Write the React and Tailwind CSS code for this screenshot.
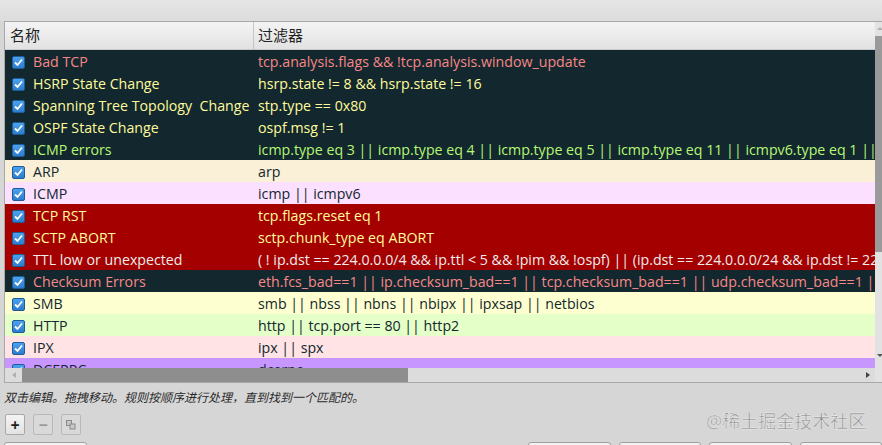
import React from "react";

const rules = [
  { name: "Bad TCP", filter: "tcp.analysis.flags && !tcp.analysis.window_update", bg: "bg-[#12272e]", fg: "text-[#f78787]" },
  { name: "HSRP State Change", filter: "hsrp.state != 8 && hsrp.state != 16", bg: "bg-[#12272e]", fg: "text-[#fffc9c]" },
  { name: "Spanning Tree Topology  Change", filter: "stp.type == 0x80", bg: "bg-[#12272e]", fg: "text-[#fffc9c]" },
  { name: "OSPF State Change", filter: "ospf.msg != 1", bg: "bg-[#12272e]", fg: "text-[#fffc9c]" },
  {
    name: "ICMP errors",
    filter: "icmp.type eq 3 || icmp.type eq 4 || icmp.type eq 5 || icmp.type eq 11 || icmpv6.type eq 1 || icmpv6.type eq 2 || icmpv6.type eq 3",
    bg: "bg-[#12272e]",
    fg: "text-[#b7f774]",
  },
  { name: "ARP", filter: "arp", bg: "bg-[#faf0d7]", fg: "text-[#12272e]" },
  { name: "ICMP", filter: "icmp || icmpv6", bg: "bg-[#fce0ff]", fg: "text-[#12272e]" },
  { name: "TCP RST", filter: "tcp.flags.reset eq 1", bg: "bg-[#a40000]", fg: "text-[#fffc9c]" },
  { name: "SCTP ABORT", filter: "sctp.chunk_type eq ABORT", bg: "bg-[#a40000]", fg: "text-[#fffc9c]" },
  {
    name: "TTL low or unexpected",
    filter: "( ! ip.dst == 224.0.0.0/4 && ip.ttl < 5 && !pim && !ospf) || (ip.dst == 224.0.0.0/24 && ip.dst != 224.0.0.251 && ip.ttl != 1)",
    bg: "bg-[#a40000]",
    fg: "text-[#ececec]",
  },
  {
    name: "Checksum Errors",
    filter: "eth.fcs_bad==1 || ip.checksum_bad==1 || tcp.checksum_bad==1 || udp.checksum_bad==1 || sctp.checksum_bad==1",
    bg: "bg-[#12272e]",
    fg: "text-[#f78787]",
  },
  { name: "SMB", filter: "smb || nbss || nbns || nbipx || ipxsap || netbios", bg: "bg-[#feffd0]", fg: "text-[#12272e]" },
  { name: "HTTP", filter: "http || tcp.port == 80 || http2", bg: "bg-[#e4ffc7]", fg: "text-[#12272e]" },
  { name: "IPX", filter: "ipx || spx", bg: "bg-[#ffe3e5]", fg: "text-[#12272e]" },
  { name: "DCERPC", filter: "dcerpc", bg: "bg-[#c797ff]", fg: "text-[#12272e]" },
];

const CheckBox = () => (
  <svg width="13" height="13" viewBox="0 0 13 13" className="shrink-0">
    <defs>
      <linearGradient id="cbg" x1="0" y1="0" x2="0" y2="1">
        <stop offset="0" stopColor="#4ea3ee" />
        <stop offset="1" stopColor="#2a7ccc" />
      </linearGradient>
    </defs>
    <rect x="0.5" y="0.5" width="12" height="12" rx="1.5" fill="url(#cbg)" stroke="#1d5c97" />
    <path d="M3 6.5 L5.5 9 L10 3.5" fill="none" stroke="#ffffff" strokeWidth="1.8" />
  </svg>
);

const RuleRow = ({ rule }) => (
  <div className={`flex h-[22px] items-center whitespace-pre pt-[2px] leading-[20px] ${rule.bg} ${rule.fg}`}>
    <div className="flex w-[249px] shrink-0 items-center overflow-hidden">
      <span className="ml-[7px] mr-[8px] flex"><CheckBox /></span>
      <span>{rule.name}</span>
    </div>
    <div className="pl-[4px]">{rule.filter}</div>
  </div>
);

export default function App() {
  return (
    <div
      className="relative h-[445px] w-[882px] overflow-hidden bg-[#d6d6d6] text-[14.2px] text-[#1e1e1e]"
      style={{ fontFamily: '"Open Sans", "Noto Sans CJK SC", sans-serif' }}
    >
      {/* window top strip */}
      <div className="h-[21px] bg-gradient-to-b from-[#e6e6e6] to-[#dcdcdc]" />

      {/* filter table */}
      <div className="ml-[4px] flex w-[890px] border border-[#a8a8a8] bg-white">
        <div className="flex w-[870px] shrink-0 flex-col">
          <div className="flex h-[28px] items-center border-b border-[#c8c8c8] bg-gradient-to-b from-[#f4f4f4] to-[#e2e2e2] text-[15px] text-[#222]">
            <div className="flex h-full w-[249px] shrink-0 items-center border-r border-[#c6c6c6] pl-[5px]">名称</div>
            <div className="pl-[4px]">过滤器</div>
          </div>
          <div className="h-[318px] overflow-hidden">
            {rules.map((r) => (
              <RuleRow key={r.name} rule={r} />
            ))}
          </div>
          {/* horizontal scrollbar */}
          <div className="flex h-[14px] items-center bg-[#dcdcdc]">
            <span className="ml-[7px] mr-[6px] h-0 w-0 border-y-[3px] border-r-[4px] border-y-transparent border-r-[#b0b0b0]" />
            <div className="h-[14px] w-[386px] bg-[#8e8e8e]" />
            <div className="flex-1" />
            <span className="mr-[5px] h-0 w-0 border-y-[3px] border-l-[4px] border-y-transparent border-l-[#444]" />
          </div>
        </div>
        {/* vertical scrollbar */}
        <div className="flex w-[14px] flex-col bg-[#e2e2e2]">
          <div className="flex h-[14px] items-start justify-start pl-[2px] pt-[5px]">
            <span className="h-0 w-0 border-x-[3px] border-b-[3px] border-x-transparent border-b-[#b0b0b0]" />
          </div>
          <div className="h-[216px] w-[7px] bg-[#9a9a9a]" />
          <div className="flex-1" />
          <div className="flex h-[30px] items-start pl-[2px] pt-[2px]">
            <span className="h-0 w-0 border-x-[3px] border-t-[3px] border-x-transparent border-t-[#555]" />
          </div>
        </div>
      </div>

      {/* hint */}
      <div className="mt-[6px] pl-[4px] text-[12px] italic text-[#2a2a2a]">
        双击编辑。拖拽移动。规则按顺序进行处理，直到找到一个匹配的。
      </div>

      {/* tool buttons */}
      <div className="mt-[7px] flex gap-[8px] pl-[5px]">
        <button className="flex h-[21px] w-[20px] items-center justify-center rounded-[2px] border border-[#a8a8a8] bg-gradient-to-b from-[#f4f4f4] to-[#e2e2e2] text-[16px] font-bold leading-none text-[#222]">
          +
        </button>
        <button className="flex h-[21px] w-[20px] items-center justify-center rounded-[2px] border border-[#b8b8b8] bg-[#d9d9d9] text-[16px] font-bold leading-none text-[#9a9a9a]">
          −
        </button>
        <button className="flex h-[21px] w-[20px] items-center justify-center rounded-[2px] border border-[#b8b8b8] bg-[#d9d9d9]">
          <svg width="10" height="10" viewBox="0 0 10 10">
            <rect x="0.5" y="0.5" width="5" height="5" fill="#c8c8c8" stroke="#8a8a8a" />
            <rect x="4" y="4" width="5" height="5" fill="#c8c8c8" stroke="#8a8a8a" />
          </svg>
        </button>
      </div>

      {/* watermark */}
      <div
        className="absolute left-[706px] top-[408px] text-[18px] text-[#8c8c8c]"
        style={{ WebkitTextStroke: "0.4px #f4f4f4" }}
      >
        @稀土掘金技术社区
      </div>

      {/* dialog buttons (tops visible) */}
      <div className="absolute left-0 top-[442px] flex w-full">
        <div className="ml-[4px] h-[10px] w-[84px] rounded-t-[3px] border border-[#a0a0a0] bg-[#f2f2f2]" />
        <div className="ml-[441px] h-[10px] w-[83px] rounded-t-[3px] border border-[#a0a0a0] bg-[#f2f2f2]" />
        <div className="ml-[8px] h-[10px] w-[83px] rounded-t-[3px] border border-[#a0a0a0] bg-[#f2f2f2]" />
        <div className="ml-[8px] h-[10px] w-[83px] rounded-t-[3px] border border-[#a0a0a0] bg-[#f2f2f2]" />
        <div className="ml-[8px] h-[10px] w-[83px] rounded-t-[3px] border border-[#a0a0a0] bg-[#f2f2f2]" />
      </div>
    </div>
  );
}
